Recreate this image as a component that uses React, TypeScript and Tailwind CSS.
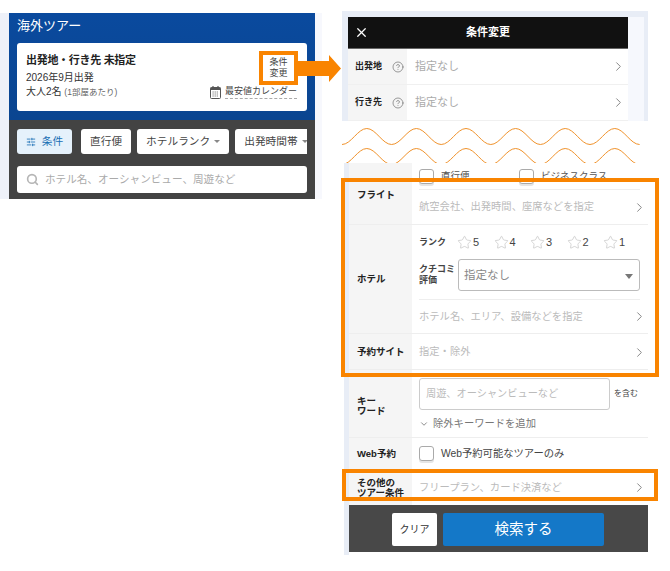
import React from "react";
import { X, ChevronRight, ChevronDown, Search, SlidersHorizontal, Star, CircleHelp } from "lucide-react";

const Chev = ({ far }: { far?: boolean }) => <ChevronRight className={`w-[15px] h-[15px] text-[#888] shrink-0 ${far ? "-mr-[7px]" : ""}`} strokeWidth={1.6} />;
const Box = () => <span className="block w-[15px] h-[15px] rounded-[3px] border border-[#aaa] bg-white shrink-0 shadow-[0_2px_0_#e5e5e5]" />;
const Caret = () => <span className="inline-block w-0 h-0 border-x-[3px] border-x-transparent border-t-[3px] border-t-[#888] ml-1 align-middle" />;

function Chip({ children, caret }: { children: React.ReactNode; caret?: boolean }) {
  return (
    <div className="h-[25px] px-[9px] bg-white rounded-[3px] flex items-center text-[10.7px] text-[#444] whitespace-nowrap shrink-0">
      {children}
      {caret && <Caret />}
    </div>
  );
}

function Row({ label, children, h }: { label: React.ReactNode; children: React.ReactNode; h: string }) {
  return (
    <div className={`flex border-b border-[#eeeeee] ${h}`}>
      <div className="w-[63px] shrink-0 bg-[#f5f5f5] pl-2 flex items-center text-[9.5px] font-bold text-[#222] leading-[10px]">{label}</div>
      <div className="flex-1 min-w-0 pl-[7px] pr-2 flex flex-col">{children}</div>
    </div>
  );
}

const Wave = ({ y }: { y: number }) => {
  let d = `M0 ${y + 16} `;
  for (let i = 0; i < 6; i++) {
    const x = i * 49.6;
    d += `C${x + 9} ${y + 16} ${x + 15.8} ${y} ${x + 24.8} ${y} S${x + 40.6} ${y + 16} ${x + 49.6} ${y + 16} `;
  }
  return <path d={d} fill="none" stroke="#f0922b" strokeWidth="1" />;
};

const Calendar = () => (
  <svg width="11" height="13" viewBox="0 0 11 13" className="shrink-0">
    <rect x="0.5" y="1.5" width="10" height="11" rx="1" fill="none" stroke="#555" />
    <rect x="0.5" y="1.5" width="10" height="2.5" fill="#555" />
    <path d="M3 0V2M8 0V2" stroke="#555" strokeWidth="1.2" />
    <path d="M2.5 6H8.5M2.5 8H8.5M2.5 10H8.5" stroke="#777" strokeWidth="1" strokeDasharray="1.2 0.9" />
  </svg>
);

export default function App() {
  return (
    <div className="relative w-[670px] h-[571px] bg-white flex overflow-hidden" style={{ fontFamily: '"Liberation Sans","Noto Sans CJK JP",sans-serif' }}>
      {/* left panel */}
      <div className="w-[322px] h-[186px] mt-[13px] shrink-0 bg-gradient-to-r from-[#eef1f9] to-[#f7f8fd] pl-[9px] pr-[7px]">
        <div className="h-[107px] px-2 pt-[3px] bg-gradient-to-b from-[#0a4a9e] to-[#0a4590]">
          <div className="text-[13px] leading-[20px] text-white">海外ツアー</div>
          <div className="mt-[7px] bg-white rounded-[3px] h-[68px] pl-[9px] pr-[10px] pt-[9px] flex flex-col">
            <div className="text-[11px] leading-[16px] font-bold text-[#222] tracking-[-0.3px]">出発地・行き先 未指定</div>
            <div className="text-[10px] leading-[14px] text-[#333] mt-[3px]">2026年9月出発</div>
            <div className="flex items-center justify-between -mt-[1px]">
              <div className="text-[10px] leading-[15px] text-[#333]">大人2名 <span className="text-[8.5px] text-[#666]">(1部屋あたり)</span></div>
              <div className="flex items-center gap-[4px] text-[9px] text-[#444]">
                <Calendar />
                <span className="border-b border-dashed border-[#aaa] leading-[13px]">最安値カレンダー</span>
              </div>
            </div>
          </div>
        </div>
        <div className="bg-[#434343] h-[79px] px-2 pt-[9px] overflow-hidden">
          <div className="flex gap-[6px] overflow-hidden">
            <div className="h-[25px] w-[55px] bg-[#e5f1fb] rounded-[3px] flex items-center justify-center gap-[6px] text-[10.7px] text-[#1a6fb5] mr-[3px] shrink-0">
              <SlidersHorizontal className="w-[10px] h-[10px]" />条件
            </div>
            <Chip>直行便</Chip>
            <Chip caret>ホテルランク</Chip>
            <Chip caret>出発時間帯</Chip>
          </div>
          <div className="mt-[12px] h-[27px] bg-white rounded-[3px] flex items-center pl-[9px] gap-[6px] text-[10.6px] text-[#aaa]">
            <Search className="w-[13px] h-[13px] text-[#b5b5b5]" strokeWidth={3} />ホテル名、オーシャンビュー、周遊など
          </div>
        </div>
      </div>

      <div className="w-[20px] shrink-0" />

      {/* right column */}
      <div className="w-[306px] shrink-0 pt-[11px]">
        <div className="h-[110px] bg-[#e8edf6] pl-[6px] pt-[6px] pr-[4px]">
          <div className="flex h-full bg-[#f6f8fd]">
            <div className="w-[280px] shrink-0">
              <div className="h-[32px] bg-[#111] flex items-center relative justify-center text-[11px] font-bold text-white border-b border-[#666]">
                <X className="absolute left-[6px] top-[8px] w-[15px] h-[15px]" strokeWidth={2} />
                条件変更
              </div>
              {["出発地", "行き先"].map((t) => (
                <div key={t} className="flex h-[36px] border-b border-[#f0f0f0] bg-white">
                  <div className="w-[59px] bg-[#f5f5f5] shrink-0 pl-[7px] flex items-center justify-between pr-[3px] text-[9px] font-bold text-[#222]">
                    {t}
                    <CircleHelp className="w-3 h-3 text-[#666]" strokeWidth={1.3} />
                  </div>
                  <div className="flex-1 flex items-center justify-between pl-2 pr-[2px] text-[11px] text-[#aaa]">
                    指定なし
                    <Chev />
                  </div>
                </div>
              ))}
            </div>
          </div>
        </div>

        <svg className="block mt-[7px] w-[300px] h-[35px]" viewBox="0 0 300 35">
          <Wave y={0.5} />
          <Wave y={20.5} />
        </svg>

        <div className="ml-[2px] h-[392px] bg-[#e8edf6] pl-[5px]">
          <div className="bg-white h-full">
            <Row label={<span className="mt-[2px]">フライト</span>} h="h-[62px]">
              <div className="h-[27px] border-b border-[#eeeeee] flex items-center text-[9.5px] text-[#555] shrink-0">
                <div className="flex items-center gap-[7px] w-[100px]"><Box /><span>直行便</span></div>
                <div className="flex items-center gap-[7px]"><Box /><span>ビジネスクラス</span></div>
              </div>
              <div className="flex-1 flex items-center justify-between text-[10.3px] text-[#bbb]">航空会社、出発時間、座席などを指定<Chev far /></div>
            </Row>
            <Row label="ホテル" h="h-[109px]">
              <div className="flex items-center h-[34px] pt-[1px] text-[9px] font-bold text-[#444] shrink-0">
                <span className="w-[38px]">ランク</span>
                <div className="flex gap-[7px] text-[11px] font-normal text-[#444]">
                  {[5, 4, 3, 2, 1].map((n) => (
                    <span key={n} className="flex items-center gap-[1px] w-[29.5px]"><Star className="w-[15px] h-[15px] text-[#bbb] shrink-0" strokeWidth={1} />{n}</span>
                  ))}
                </div>
              </div>
              <div className="flex items-center h-[32px] shrink-0">
                <span className="w-[39px] text-[9px] leading-[11px] font-bold text-[#444]">クチコミ<br />評価</span>
                <div className="flex-1 h-[32px] border border-[#bbb] rounded-[3px] flex items-center justify-between pl-[5px] pr-[6px] pt-[2px] text-[11.5px] text-[#888]">
                  指定なし
                  <span className="w-0 h-0 border-x-[4px] border-x-transparent border-t-[5px] border-t-[#777]" />
                </div>
              </div>
              <div className="mt-[8px] border-t border-[#eeeeee] flex-1 flex items-center justify-between text-[10.3px] text-[#bbb]">ホテル名、エリア、設備などを指定<Chev far /></div>
            </Row>
            <Row label="予約サイト" h="h-[36px]">
              <div className="flex-1 flex items-center justify-between pt-[1px] text-[10.3px] text-[#bbb]">指定・除外<Chev far /></div>
            </Row>
            <Row label={<span className="mt-[4px]">キー<br />ワード</span>} h="h-[68px]">
              <div className="flex items-center mt-[8px] gap-1 shrink-0 -mr-[2px]">
                <div className="w-[191px] h-[32px] border border-[#ccc] rounded-[3px] flex items-center pl-[6px] text-[10.2px] text-[#bbb]">周遊、オーシャンビューなど</div>
                <span className="text-[8px] text-[#444] whitespace-nowrap">を含む</span>
              </div>
              <div className="flex items-center gap-[4px] mt-[6px] text-[10.3px] text-[#777]"><ChevronDown className="w-[10px] h-[10px]" />除外キーワードを追加</div>
            </Row>
            <Row label="Web予約" h="h-[32px]">
              <div className="flex-1 flex items-center gap-[7px] text-[10.3px] text-[#444]"><Box />Web予約可能なツアーのみ</div>
            </Row>
            <div className="flex h-[35px]">
              <div className="w-[63px] shrink-0 bg-[#f5f5f5] pl-2 flex items-center text-[9.5px] font-bold text-[#222] leading-[10px]">その他の<br />ツアー条件</div>
              <div className="flex-1 pl-[7px] pr-2 flex items-center justify-between text-[10.3px] text-[#bbb]">フリープラン、カード決済など<Chev far /></div>
            </div>
            <div className="h-[47px] bg-[#484848] flex items-center justify-start pl-[43px] pt-[2px] gap-[6px]">
              <div className="w-[45px] h-[33px] bg-white rounded-[2px] flex items-center justify-center text-[10px] text-[#333]">クリア</div>
              <div className="w-[161px] h-[33px] bg-[#1478c8] rounded-[2px] flex items-center justify-center text-[14.5px] text-white">検索する</div>
            </div>
          </div>
        </div>
      </div>

      {/* annotations */}
      <div className="absolute left-[259px] top-[51px] w-[39px] h-[34px] border-[4px] border-[#f98400] bg-white flex items-center justify-center text-[9px] leading-[11px] text-[#444] text-center">条件<br />変更</div>
      <svg className="absolute left-[298px] top-[55px]" width="44" height="27" viewBox="0 0 44 27">
        <path d="M0 6H31V0L43 13.5L31 27V21H0Z" fill="#f98400" />
      </svg>
      <div className="absolute left-[341px] top-[178px] w-[318px] h-[199px] border-[4px] border-[#f98400]" />
      <div className="absolute left-[342px] top-[469px] w-[316px] h-[32px] border-[4px] border-[#f98400]" />
    </div>
  );
}
